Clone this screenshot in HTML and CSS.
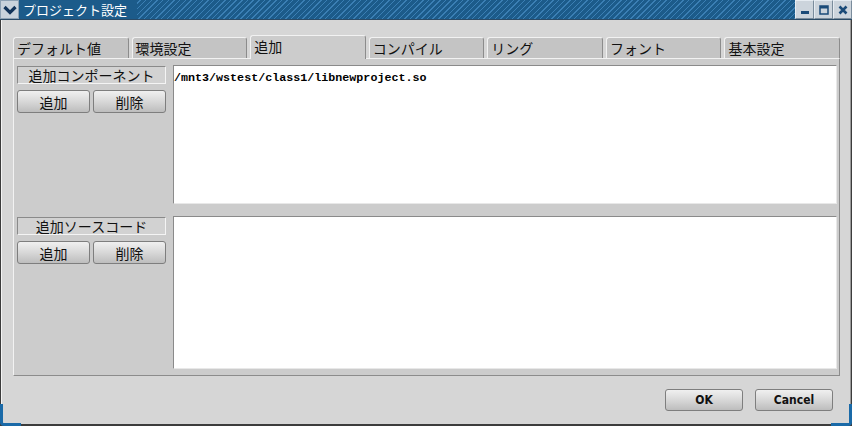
FILE: index.html
```html
<!DOCTYPE html>
<html lang="ja">
<head>
<meta charset="utf-8">
<link rel="stylesheet" href="styles.css">
</head>
<body>
<div class="window">
  <div class="titlebar">
    <div class="menu-btn"><svg width="14" height="10" viewBox="0 0 14 10"><path d="M1.5 2 L7 7.5 L12.5 2" fill="none" stroke="#12345a" stroke-width="3.2"/></svg></div>
    <div class="title">プロジェクト設定</div>
    <div class="stripes"></div>
    <div class="ctrl"><svg width="12" height="12" viewBox="0 0 12 12"><rect x="2" y="7" width="8" height="3" fill="#1a4a78"/></svg></div>
    <div class="ctrl"><svg width="12" height="12" viewBox="0 0 12 12"><rect x="2" y="2" width="8" height="8" fill="none" stroke="#1a4a78" stroke-width="1.5"/><rect x="2" y="2" width="8" height="2.5" fill="#1a4a78"/></svg></div>
    <div class="ctrl"><svg width="12" height="12" viewBox="0 0 12 12"><path d="M2.5 2.5 L9.5 9.5 M9.5 2.5 L2.5 9.5" stroke="#1a4a78" stroke-width="2.6"/></svg></div>
  </div>
  <div class="client">
    <div class="tabs">
      <div class="tab">デフォルト値</div>
      <div class="tab">環境設定</div>
      <div class="tab active">追加</div>
      <div class="tab">コンパイル</div>
      <div class="tab">リング</div>
      <div class="tab">フォント</div>
      <div class="tab">基本設定</div>
    </div>
    <div class="panel">
      <div class="section top">
        <div class="side">
          <div class="label">追加コンポーネント</div>
          <div class="btnrow"><button class="btn">追加</button><button class="btn">削除</button></div>
        </div>
        <div class="list"><div class="item">/mnt3/wstest/class1/libnewproject.so</div></div>
      </div>
      <div class="section bottom">
        <div class="side">
          <div class="label">追加ソースコード</div>
          <div class="btnrow"><button class="btn">追加</button><button class="btn">削除</button></div>
        </div>
        <div class="list"></div>
      </div>
    </div>
    <div class="footer">
      <button class="btn dlg">OK</button>
      <button class="btn dlg">Cancel</button>
    </div>
  </div>
  <div class="corner left"></div>
  <div class="corner right"></div>
</div>
</body>
</html>
```
FILE: styles.css
```css
* { box-sizing: border-box; }
html, body { margin: 0; padding: 0; }
body {
  width: 852px;
  height: 426px;
  overflow: hidden;
  background: #d6d6d6;
  font-family: "Noto Sans CJK JP", "Noto Sans", sans-serif;
}
.window {
  position: relative;
  width: 852px;
  height: 426px;
  border-left: 1px solid #3c3c3c;
  border-right: 1px solid #3c3c3c;
  border-bottom: 2px solid #3c3c3c;
  background: #d6d6d6;
  display: flex;
  flex-direction: column;
}
.titlebar {
  height: 20px;
  display: flex;
  align-items: stretch;
  background: #1c5b8a;
  border-bottom: 1px solid #2a4a66;
  margin-left: -1px;
  margin-right: -1px;
}
.menu-btn {
  width: 19px;
  background: #c9d3dc;
  border: 1px solid #8ea2b4;
  display: flex;
  align-items: center;
  justify-content: center;
}
.title {
  color: #ffffff;
  font-size: 13px;
  line-height: 19px;
  padding-left: 4px;
  padding-right: 10px;
  white-space: nowrap;
}
.stripes {
  flex: 1;
  background: repeating-linear-gradient(135deg, #1c5b8a 0 2px, #3b7fb4 2px 3px, #1c5b8a 3px 4px);
}
.ctrl {
  width: 19px;
  background: #ccd4dc;
  border: 1px solid #7a8c9c;
  border-top-color: #e6ecf2;
  border-left-color: #e6ecf2;
  display: flex;
  align-items: center;
  justify-content: center;
}
.client {
  flex: 1;
  display: flex;
  flex-direction: column;
  padding: 15px 10px 0 11px;
  border-left: 1px solid #f4f4f4;
  border-right: 1px solid #9a9a9a;
}
.tabs {
  display: flex;
  gap: 3px;
  height: 23px;
  align-items: flex-end;
  position: relative;
  z-index: 1;
}
.tab {
  flex: 1;
  height: 21px;
  background: #c4c4c4;
  border: 1px solid #8c8c8c;
  border-left-color: #f2f2f2;
  border-top-color: #f2f2f2;
  border-bottom: none;
  border-radius: 3px 3px 0 0;
  font-size: 14px;
  line-height: 20px;
  padding-left: 3px;
  color: #111;
  white-space: nowrap;
}
.tab.active {
  height: 24px;
  background: #cccccc;
  margin-bottom: -1px;
}
.panel {
  height: 318px;
  background: #cccccc;
  border: 1px solid #8c8c8c;
  border-top-color: #f2f2f2;
  border-left-color: #f2f2f2;
  padding: 6px 2px 6px 3px;
  display: flex;
  flex-direction: column;
  gap: 12px;
}
.section {
  display: flex;
  gap: 7px;
}
.section.top { height: 139px; }
.section.bottom { flex: 1; }
.side {
  width: 149px;
  padding-top: 1px;
  display: flex;
  flex-direction: column;
  gap: 6px;
}
.label {
  height: 18px;
  background: #d2d2d2;
  border: 1px solid #8a8a8a;
  border-right-color: #f4f4f4;
  border-bottom-color: #f4f4f4;
  font-size: 14px;
  line-height: 16px;
  text-align: center;
  color: #111;
  white-space: nowrap;
}
.btnrow {
  display: flex;
  gap: 3px;
}
.btn {
  font-family: "Noto Sans CJK JP", "Noto Sans", sans-serif;
  background: linear-gradient(#f0f0f0, #d8d8d8 50%, #bdbdbd);
  border: 1px solid #7e7e7e;
  border-radius: 3px;
  color: #111;
  padding: 0;
  margin: 0;
}
.btnrow .btn {
  width: 73px;
  height: 23px;
  font-size: 14px;
  line-height: 20px;
}
.list {
  flex: 1;
  background: #ffffff;
  border: 1px solid #8a8a8a;
  border-right-color: #e8e8e8;
  border-bottom-color: #e8e8e8;
  padding: 5px 0 0 0;
}
.item {
  font-family: "Liberation Mono", "DejaVu Sans Mono", monospace;
  font-weight: bold;
  font-size: 11.7px;
  line-height: 14px;
  color: #000;
}
.footer {
  flex: 1;
  display: flex;
  justify-content: flex-end;
  align-items: flex-start;
  padding-top: 13px;
  padding-right: 7px;
  gap: 12px;
}
.btn.dlg {
  width: 78px;
  height: 22px;
  font-family: "DejaVu Sans Condensed", "Liberation Sans", sans-serif;
  font-weight: bold;
  font-size: 12px;
  line-height: 20px;
}
.corner {
  position: absolute;
  bottom: -2px;
  width: 21px;
  height: 22px;
  border-bottom: 3px solid #1a6aa8;
}
.corner.left {
  left: -1px;
  border-left: 3px solid #1a6aa8;
  border-bottom-left-radius: 4px;
}
.corner.right {
  right: -1px;
  border-right: 3px solid #1a6aa8;
  border-bottom-right-radius: 4px;
}
```
